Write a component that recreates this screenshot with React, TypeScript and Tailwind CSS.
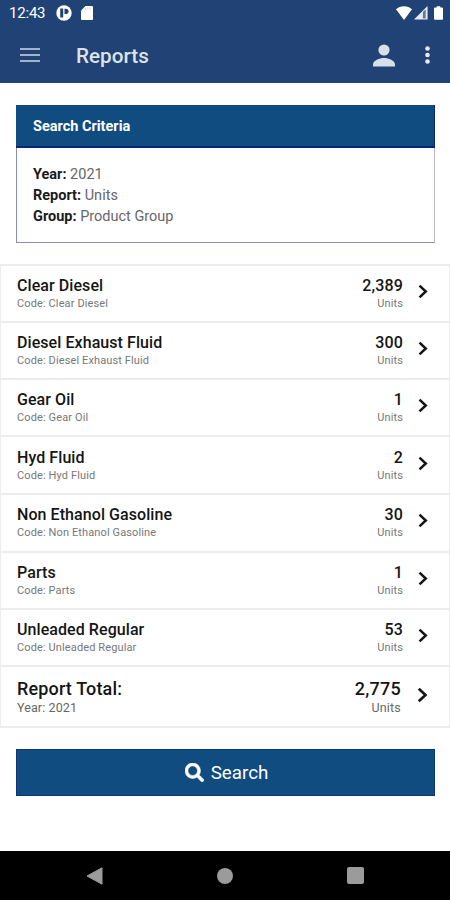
import React from 'react';

const rows = [
  { name: 'Clear Diesel', value: '2,389', h: 'h-[57px]' },
  { name: 'Diesel Exhaust Fluid', value: '300', h: 'h-[57px]' },
  { name: 'Gear Oil', value: '1', h: 'h-[57px]' },
  { name: 'Hyd Fluid', value: '2', h: 'h-[58px]' },
  { name: 'Non Ethanol Gasoline', value: '30', h: 'h-[58px] pb-[2px]' },
  { name: 'Parts', value: '1', h: 'h-[57px]' },
  { name: 'Unleaded Regular', value: '53', h: 'h-[57px]' },
];

function Chevron({ large }: { large?: boolean }) {
  return (
    <svg className={large ? 'mb-[3px] h-4 w-[11px]' : 'mb-[4px] h-[15px] w-[10px]'} viewBox="0 0 10 15" fill="none" stroke="#151515" strokeWidth="2.5">
      <path d="M1.5 1.6 7.8 7.5 1.5 13.4" />
    </svg>
  );
}

function StatusBar() {
  return (
    <div className="flex h-[27px] items-center justify-between pl-[9px] pr-[7px] pb-px">
      <div className="flex items-center">
        <span className="w-[37px] whitespace-nowrap text-[15px] leading-[18px] tracking-[-0.2px]">12:43</span>
        <svg className="ml-[10px] h-4 w-4" viewBox="0 0 16 16">
          <circle cx="8" cy="8" r="7.7" fill="#fff" />
          <path d="M4.2 3.5h3v9h-3z" fill="#204274" />
          <path d="M8.500 3.700h1.400a2.600 2.600 0 0 1 0 5.200H8.500z" fill="#204274" />
        </svg>
        <svg className="ml-[9px] h-[14px] w-3" viewBox="0 0 12 14">
          <path d="M4.500 0H11a1 1 0 0 1 1 1v12a1 1 0 0 1-1 1H1a1 1 0 0 1-1-1V4.500z" fill="#fff" />
          <path d="M4.600 2v2M6.800 1.500V3.500M9 1.500V3.500" stroke="#c8d0dc" strokeWidth="1" />
        </svg>
      </div>
      <div className="flex items-center">
        <svg className="h-[14px] w-4" viewBox="0 0 16 14">
          <path d="M0 3.300C2.200 1.300 5 .3 8 .3s5.800 1 8 3L8 14z" fill="#fff" />
        </svg>
        <svg className="ml-[2px] h-[14px] w-[14px]" viewBox="0 0 15 15">
          <path d="M0 14.500 14.500 0v14.500z" fill="#e9edf3" />
          <path d="M9.500 6.500 12.500 3.500V13.500h-3z" fill="#65789a" />
        </svg>
        <svg className="ml-[6px] h-[14px] w-[9px]" viewBox="0 0 10 15">
          <path d="M3 0h4v1.500h2a1 1 0 0 1 1 1V14a1 1 0 0 1-1 1H1a1 1 0 0 1-1-1V2.500a1 1 0 0 1 1-1h2z" fill="#fff" />
        </svg>
      </div>
    </div>
  );
}

export default function App() {
  return (
    <div className="flex h-[900px] w-[450px] flex-col overflow-hidden bg-white font-['Roboto','Liberation_Sans',sans-serif] text-[#151515]">
      <header className="h-[83px] shrink-0 bg-[#204274] text-white">
        <StatusBar />
        <div className="flex h-14 items-center pl-5 pr-5">
          <svg className="h-[14px] w-5" viewBox="0 0 20 14">
            <path d="M0 1h20M0 7h20M0 13h20" stroke="#a5b3c8" strokeWidth="1.900" />
          </svg>
          <h1 className="ml-9 pt-px text-[20.700px] font-medium leading-7 text-[#dce2ea]">Reports</h1>
          <svg className="ml-auto h-[23px] w-[22px]" viewBox="0 0 22 23" fill="#d8dfe8">
            <circle cx="11" cy="6" r="5.600" />
            <path d="M0 22.500v-2.200C0 16.500 6.500 14 11 14s11 2.500 11 6.300v2.200z" />
          </svg>
          <svg className="ml-[30px] h-[18px] w-[5px]" viewBox="0 0 5 18" fill="#e8ecf2">
            <circle cx="2.500" cy="2.500" r="2.300" />
            <circle cx="2.500" cy="9" r="2.300" />
            <circle cx="2.500" cy="15.500" r="2.300" />
          </svg>
        </div>
      </header>

      <main className="flex flex-1 flex-col">
        <section className="ml-4 mr-[15px] mt-[22px] h-[138px] border border-[#8b8db5] border-r-[#b5b5cb]">
          <div className="-mx-px -mt-px flex h-[43px] items-center border-b-2 border-r border-[#0b2479] bg-[#104c7f] px-[17px] pt-[3px] text-[14.500px] font-bold text-white">
            <span>Search Criteria</span>
          </div>
          <div className="px-4 pt-[16px] text-[14.500px] leading-[21px] text-[#666]">
            <p><b className="font-bold text-[#1b1b1b]">Year:</b> 2021</p>
            <p><b className="font-bold text-[#1b1b1b]">Report:</b> Units</p>
            <p><b className="font-bold text-[#1b1b1b]">Group:</b> Product Group</p>
          </div>
        </section>

        <section className="mt-[21px] border-x border-t-2 border-[#ededed]">
          {rows.map((row) => (
            <div key={row.name} className={`flex items-center border-b-2 border-[#ededed] pl-4 pr-[21px] ${row.h}`}>
              <div className="flex-1">
                <div className="text-[16px] font-medium leading-[19px] tracking-[0.07px]">{row.name}</div>
                <div className="pt-px text-[11px] leading-[15px] tracking-[0.12px] text-[#777]">Code: {row.name}</div>
              </div>
              <div className="mr-[15px] text-right">
                <div className="text-[16px] font-medium leading-[19px] tracking-[0.15px]">{row.value}</div>
                <div className="pt-px text-[11px] leading-[15px] tracking-[0.12px] text-[#777]">Units</div>
              </div>
              <Chevron />
            </div>
          ))}
          <div className="flex h-[61px] items-center border-b-2 border-[#ededed] pl-4 pr-[21px]">
            <div className="flex-1">
              <div className="text-[18px] font-medium leading-[21px] tracking-[0.15px]">Report Total:</div>
              <div className="text-[12.500px] leading-[17px] tracking-[0.1px] text-[#666]">Year: 2021</div>
            </div>
            <div className="mr-4 text-right">
              <div className="text-[18px] font-medium leading-[21px] tracking-[0.25px]">2,775</div>
              <div className="text-[12.500px] leading-[17px] tracking-[0.2px] text-[#666]">Units</div>
            </div>
            <Chevron large />
          </div>
        </section>

        <button className="ml-4 mr-[15px] mt-[21px] flex h-[47px] items-center justify-center border border-[#0b3678] bg-[#104c7f] pl-[2px] text-[18.800px] text-white">
          <svg className="mr-[7px] h-[19px] w-[19px]" viewBox="0 0 512 512" fill="#fff" stroke="#fff" strokeWidth="14">
            <path d="M505 442.700 405.300 343c-4.500-4.500-10.600-7-17-7H372c27.600-35.300 44-79.700 44-128C416 93.100 322.900 0 208 0S0 93.100 0 208s93.100 208 208 208c48.300 0 92.700-16.400 128-44v16.300c0 6.400 2.500 12.500 7 17l99.700 99.700c9.400 9.400 24.600 9.400 33.900 0l28.300-28.300c9.400-9.400 9.400-24.600.1-34zM208 336c-70.700 0-128-57.200-128-128 0-70.700 57.200-128 128-128 70.700 0 128 57.200 128 128 0 70.700-57.200 128-128 128z" />
          </svg>
          <span className="pt-px">Search</span>
        </button>
      </main>

      <nav className="flex h-[49px] shrink-0 items-center justify-between bg-black pl-[86px] pr-[86px]">
        <svg className="h-[18px] w-[17px]" viewBox="0 0 17 18">
          <path d="M1 9 16 .8v16.400z" fill="#9b9b9b" stroke="#9b9b9b" strokeLinejoin="round" />
        </svg>
        <div className="h-4 w-4 rounded-full bg-[#9b9b9b]" />
        <div className="h-[17px] w-[17px] rounded-[2px] bg-[#9b9b9b]" />
      </nav>
    </div>
  );
}
